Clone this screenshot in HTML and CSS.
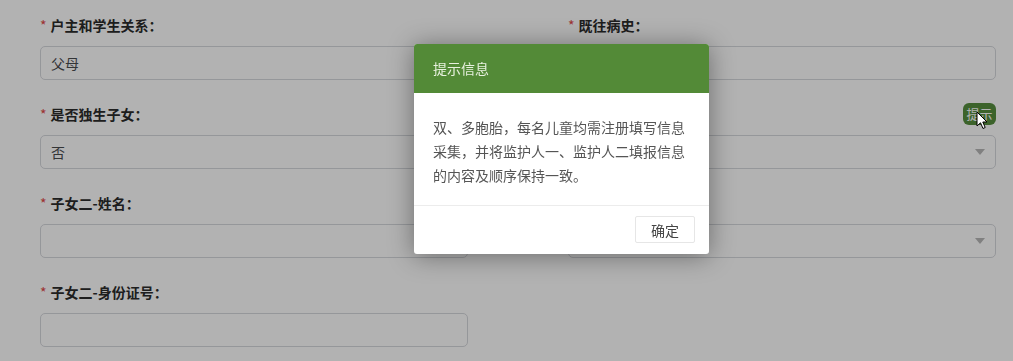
FILE: index.html
```html
<!DOCTYPE html>
<html lang="zh-CN">

<head>
    <meta charset="UTF-8">
    <meta name="viewport" content="width=device-width, initial-scale=1.0">
    <title>学生信息采集</title>
    <link rel="stylesheet" href="styles.css">
</head>

<body>
    <form class="info-form">
        <div class="form-col">
            <div class="form-item">
                <div class="item-label"><span class="req">*</span>户主和学生关系：</div>
                <div class="field">父母</div>
            </div>
            <div class="form-item">
                <div class="item-label"><span class="req">*</span>是否独生子女：</div>
                <div class="field">否</div>
            </div>
            <div class="form-item">
                <div class="item-label"><span class="req">*</span>子女二-姓名：</div>
                <div class="field"></div>
            </div>
            <div class="form-item">
                <div class="item-label"><span class="req">*</span>子女二-身份证号：</div>
                <div class="field"></div>
            </div>
        </div>
        <div class="form-col">
            <div class="form-item">
                <div class="item-label"><span class="req">*</span>既往病史：</div>
                <div class="field"></div>
            </div>
            <div class="form-item">
                <div class="item-label label-row">
                    <span></span>
                    <button type="button" class="tip-button">提示</button>
                </div>
                <div class="field select"><span class="caret"></span></div>
            </div>
            <div class="form-item">
                <div class="item-label"></div>
                <div class="field select"><span class="caret"></span></div>
            </div>
        </div>
    </form>

    <div class="mask"></div>

    <div class="message-box">
        <div class="box-header">提示信息</div>
        <div class="box-content">双、多胞胎，每名儿童均需注册填写信息采集，并将监护人一、监护人二填报信息的内容及顺序保持一致。</div>
        <div class="box-footer">
            <button type="button" class="ok-button">确定</button>
        </div>
    </div>

    <svg class="cursor" width="12" height="19" viewBox="0 0 12 19">
        <path d="M1 1 L1 15 L4.5 11.8 L7 17.5 L9.2 16.5 L6.8 11 L11 11 Z" fill="#fff" stroke="#000" stroke-width="1" stroke-linejoin="round" />
    </svg>
</body>

</html>
```

FILE: styles.css
```css
body {
    margin: 0;
    background: #ffffff;
    font-family: "Noto Sans CJK SC", "Noto Sans", sans-serif;
    font-size: 14px;
    color: #333333;
}

.info-form {
    display: flex;
    gap: 100px;
    padding: 15px 0 0 40px;
}

.form-col {
    width: 428px;
    display: flex;
    flex-direction: column;
}

.form-item {
    height: 89px;
}

.item-label {
    height: 20px;
    line-height: 20px;
    font-weight: bold;
    color: #2b2b2b;
    margin-bottom: 11px;
}

.label-row {
    display: flex;
    justify-content: space-between;
    align-items: center;
}

.req {
    color: #e04848;
    font-weight: normal;
    margin-right: 4px;
}

.field {
    box-sizing: border-box;
    height: 34px;
    border: 1px solid #d6d8dd;
    border-radius: 5px;
    padding: 0 10px;
    line-height: 32px;
    color: #4a4c50;
    display: flex;
    align-items: center;
}

.select {
    justify-content: flex-end;
    padding-right: 10px;
}

.caret {
    width: 0;
    height: 0;
    border-left: 5px solid transparent;
    border-right: 5px solid transparent;
    border-top: 6px solid #b8b8b8;
}

.tip-button {
    width: 33px;
    height: 22px;
    padding: 0;
    border: none;
    border-radius: 6px;
    background: #578f3e;
    color: #ffffff;
    font-family: inherit;
    font-size: 13px;
    line-height: 22px;
}

.mask {
    position: fixed;
    inset: 0;
    background: rgba(0, 0, 0, 0.3);
}

.message-box {
    position: absolute;
    left: 414px;
    top: 44px;
    width: 295px;
    background: #ffffff;
    border-radius: 3px;
    overflow: hidden;
    box-shadow: 0 2px 26px rgba(0, 0, 0, 0.4);
}

.box-header {
    height: 49px;
    line-height: 49px;
    padding: 0 19px;
    background: #538a37;
    color: #e8f1df;
    font-size: 14px;
}

.box-content {
    padding: 22px 19px 18px;
    line-height: 24px;
    color: #555555;
    height: 72px;
}

.box-footer {
    border-top: 1px solid #ececec;
    display: flex;
    justify-content: flex-end;
    padding: 10px 14px 11px;
}

.ok-button {
    width: 60px;
    height: 27px;
    padding: 0;
    background: #ffffff;
    border: 1px solid #e6e6e6;
    border-radius: 2px;
    font-family: inherit;
    font-size: 14px;
    color: #444444;
}

.cursor {
    position: absolute;
    left: 976px;
    top: 111px;
}
```
